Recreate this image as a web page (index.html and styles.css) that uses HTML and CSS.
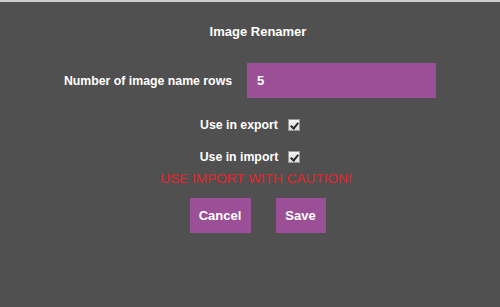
FILE: index.html
```html
<!DOCTYPE html>
<html lang="en">
<head>
  <meta charset="UTF-8">
  <title>Image Renamer</title>
  <link rel="stylesheet" href="styles.css">
</head>
<body>
  <div class="dialog">
    <h1 class="title">Image Renamer</h1>

    <div class="row">
      <label class="label" for="rows">Number of image name rows</label>
      <input class="field" id="rows" type="text" value="5">
    </div>

    <div class="row check-row">
      <label class="label" for="useExport">Use in export</label>
      <input class="check" id="useExport" type="checkbox" checked>
    </div>

    <div class="row check-row">
      <label class="label" for="useImport">Use in import</label>
      <input class="check" id="useImport" type="checkbox" checked>
    </div>

    <div class="caution">USE IMPORT WITH CAUTION!</div>

    <div class="buttons">
      <button class="btn btn-cancel">Cancel</button>
      <button class="btn btn-save">Save</button>
    </div>
  </div>
</body>
</html>
```

FILE: styles.css
```css
html, body {
  margin: 0;
  padding: 0;
  height: 100%;
}
body {
  background: #505050;
  border-top: 2px solid #cfcfcf;
  box-sizing: border-box;
  font-family: 'Liberation Sans', Arial, sans-serif;
  color: #fff;
}
.dialog {
  display: flex;
  flex-direction: column;
  align-items: center;
  padding-top: 22px;
}
.title {
  margin: 0 0 0 16px;
  font-size: 13px;
  font-weight: bold;
  line-height: 15px;
}
.row {
  display: flex;
  align-items: center;
  gap: 15px;
}
.row:first-of-type {
  margin-top: 24px;
}
.label {
  font-size: 12.3px;
  font-weight: bold;
}
.field {
  width: 189px;
  height: 35px;
  box-sizing: border-box;
  border: none;
  background: #9b4f96;
  color: #fff;
  font-family: inherit;
  font-size: 13px;
  font-weight: bold;
  padding: 0 10px;
  outline: none;
}
.check-row {
  gap: 10px;
  margin-top: 20px;
}
.check-row + .check-row {
  margin-top: 18px;
}
.check {
  appearance: none;
  -webkit-appearance: none;
  width: 12px;
  height: 12px;
  margin: 0;
  border: 1px solid #9a9a9a;
  background: linear-gradient(#f4f4f4, #dcdcdc);
  position: relative;
}
.check:checked::after {
  content: "";
  position: absolute;
  left: 3px;
  top: 1px;
  width: 3px;
  height: 6px;
  border: solid #2a2a2a;
  border-width: 0 2px 2px 0;
  transform: rotate(40deg);
}
.caution {
  margin: 7px 0 0 12px;
  color: #e2252b;
  font-size: 13.6px;
}
.buttons {
  display: flex;
  gap: 25px;
  margin: 12px 0 0 15px;
}
.btn {
  height: 35px;
  border: none;
  background: #9b4f96;
  color: #fff;
  font-family: inherit;
  font-size: 13px;
  font-weight: bold;
  cursor: pointer;
}
.btn-cancel {
  width: 61px;
}
.btn-save {
  width: 50px;
}
```
